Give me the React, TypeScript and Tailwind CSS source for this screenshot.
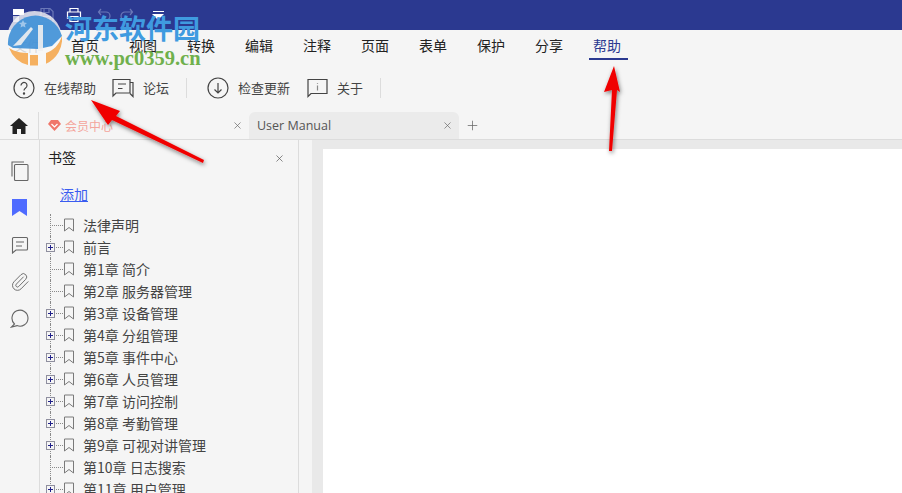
import React from 'react';
import { X, Plus, Paperclip } from 'lucide-react';

const menus = ['首页', '视图', '转换', '编辑', '注释', '页面', '表单', '保护', '分享'];

const bookmarks = [
  { label: '法律声明', expand: false },
  { label: '前言', expand: true },
  { label: '第1章 简介', expand: false },
  { label: '第2章 服务器管理', expand: false },
  { label: '第3章 设备管理', expand: true },
  { label: '第4章 分组管理', expand: true },
  { label: '第5章 事件中心', expand: true },
  { label: '第6章 人员管理', expand: true },
  { label: '第7章 访问控制', expand: true },
  { label: '第8章 考勤管理', expand: true },
  { label: '第9章 可视对讲管理', expand: true },
  { label: '第10章 日志搜索', expand: false },
  { label: '第11章 用户管理', expand: true },
];

function BookmarkRow({ label, expand }: { label: string; expand: boolean }) {
  return (
    <div className="h-[22px] shrink-0 flex items-center relative">
      {/* dotted tree lines */}
      <div className="absolute left-[11px] top-0 bottom-0 border-l border-dotted border-[#8a8a8a]" />
      <div className="w-[24px] shrink-0 relative h-full flex items-center">
        <div className="absolute left-[11px] right-0 top-1/2 border-t border-dotted border-[#8a8a8a]" />
        {expand && (
          <div className="relative ml-[7px] w-[9px] h-[9px] border border-[#8f8f9f] bg-[#f5f5f5] flex items-center justify-center">
            <div className="absolute w-[5px] h-px bg-[#20208a]" />
            <div className="absolute h-[5px] w-px bg-[#20208a]" />
          </div>
        )}
      </div>
      <svg width="12" height="14" viewBox="0 0 12 14" className="shrink-0" fill="none" stroke="#7a7a7a" strokeWidth="1">
        <path d="M1.5 1h9v12L6 9.5 1.5 13z" />
      </svg>
      <span className="ml-[8px] text-[14px] text-[#444] whitespace-nowrap">{label}</span>
    </div>
  );
}

export default function App() {
  return (
    <div
      className="w-[902px] h-[493px] overflow-hidden relative bg-[#f5f5f5] flex flex-col"
      style={{ fontFamily: '"Noto Sans CJK SC", "Noto Sans", sans-serif' }}
    >
      {/* Title bar */}
      <div className="h-[30px] shrink-0 bg-[#2b3990] flex items-center pl-[13px] gap-[12px]">
        <div className="w-[11px] h-[13px] flex flex-col gap-[1px]">
          <div className="h-[6px] bg-white" />
          <div className="h-[6px] bg-white/70 w-[6px]" />
        </div>
        <svg width="16" height="16" viewBox="0 0 16 16" fill="none" stroke="#6b78b8" strokeWidth="1.2" className="ml-[3px]">
          <path d="M2 1.5h9l3 3v10H2z" />
          <path d="M5 1.5v4h5v-4M5 14.5v-5h6v5" />
        </svg>
        <svg width="16" height="16" viewBox="0 0 16 16" fill="none" stroke="white" strokeWidth="1.2" className="-ml-[1px]">
          <path d="M4 5V1.5h8V5M4 11.5H1.5V5h13v6.5H12" />
          <path d="M4 9.5h8v5H4z" />
        </svg>
        <svg width="14" height="14" viewBox="0 0 14 14" fill="none" stroke="#6b78b8" strokeWidth="1.2" className="ml-[3px]">
          <path d="M4 1L1.5 4 4 7M1.5 4H9a3.5 3.5 0 0 1 0 8H5" />
        </svg>
        <svg width="14" height="14" viewBox="0 0 14 14" fill="none" stroke="#6b78b8" strokeWidth="1.2" className="-ml-[3px]">
          <path d="M10 1l2.5 3L10 7M12.5 4H5a3.5 3.5 0 0 0 0 8h4" />
        </svg>
        <div className="ml-[6px] flex flex-col items-center gap-[2px]">
          <div className="w-[11px] h-px bg-white" />
          <div className="w-0 h-0 border-x-[6px] border-x-transparent border-t-[6px] border-t-white" />
        </div>
      </div>

      {/* Menu row */}
      <div className="h-[33px] shrink-0 flex items-start pt-[3px] pl-[13px] text-[14px] text-[#222]">
        <span className="w-[58px] h-[27px] flex items-center text-[#555] pb-[2px]">文件</span>
        <div className="flex gap-[30px]">
          {menus.map((m) => (
            <span key={m} className="w-[28px] h-[27px] pb-[2px] flex items-center justify-center whitespace-nowrap">
              {m}
            </span>
          ))}
          <span className="w-[39px] -ml-[4px] h-[27px] pl-[4px] flex items-center text-[#2b3990] border-b-2 border-[#2b3990]">
            帮助
          </span>
        </div>
      </div>

      {/* Toolbar */}
      <div className="h-[49px] shrink-0 flex items-center pl-[13px] text-[13px] text-[#444]">
        <svg width="22" height="22" viewBox="0 0 22 22" fill="none" stroke="#444" strokeWidth="1.2">
          <circle cx="11" cy="11" r="10" />
          <path d="M8 8.5a3 3 0 1 1 4.6 2.5c-1 .7-1.6 1.2-1.6 2.5" />
          <circle cx="11" cy="16.5" r=".6" fill="#444" />
        </svg>
        <span className="ml-[9px]">在线帮助</span>
        <svg width="22" height="20" viewBox="0 0 22 20" fill="none" stroke="#444" strokeWidth="1.2" className="ml-[16px]">
          <path d="M1 1.5h17v13.5H4L1 18z" />
          <path d="M18 4.5h3v14l-3-3M6 6h8M6 10.5h4.5" />
        </svg>
        <span className="ml-[9px]">论坛</span>
        <div className="w-px h-[20px] bg-[#dcdcdc] ml-[17px]" />
        <svg width="22" height="22" viewBox="0 0 22 22" fill="none" stroke="#444" strokeWidth="1.2" className="ml-[20px]">
          <circle cx="11" cy="11" r="10" />
          <path d="M11 6v9.5M7.5 12.5l3.5 3.5 3.5-3.5" />
        </svg>
        <span className="ml-[9px]">检查更新</span>
        <svg width="21" height="20" viewBox="0 0 21 20" fill="none" stroke="#444" strokeWidth="1.2" className="ml-[17px]">
          <path d="M1 1.5h19v14H4L1 18.5z" />
          <path d="M10.5 5v.8M10.5 7.5v5" stroke="#888" />
        </svg>
        <span className="ml-[9px]">关于</span>
        <div className="w-px h-[20px] bg-[#dcdcdc] ml-[17px]" />
      </div>

      {/* Tabs */}
      <div className="h-[28px] shrink-0 flex items-end border-b border-[#dcdcdc] text-[12px]">
        <div className="w-[39px] h-[27px] flex items-center justify-center border-r border-[#dcdcdc]">
          <svg width="18" height="16" viewBox="0 0 18 16" fill="#222">
            <path d="M9 0L0 8h2.5v8H7v-5h4v5h4.5V8H18z" />
          </svg>
        </div>
        <div className="w-[210px] h-[27px] flex items-center pl-[9px] pr-[6px]">
          <svg width="13" height="11" viewBox="0 0 13 11" fill="#f0766a">
            <path d="M3 0h7l3 4-6.5 7L0 4z" />
            <path d="M3.5 4l3 3 3-3" stroke="white" strokeWidth="1.2" fill="none" />
          </svg>
          <span className="ml-[4px] text-[#f4a59c]">会员中心</span>
          <X size={11} className="ml-auto text-[#666]" strokeWidth={1.5} />
        </div>
        <div className="w-[210px] h-[27px] bg-[#ebebeb] rounded-t-[6px] flex items-center pl-[8px] pr-[6px] text-[#555]">
          <span className="text-[12.5px] mt-[2px]" style={{ fontFamily: '"Open Sans", sans-serif' }}>
            User Manual
          </span>
          <X size={11} className="ml-auto text-[#666]" strokeWidth={1.5} />
        </div>
        <Plus size={15} className="ml-[6px] mb-[6px] text-[#666]" strokeWidth={1.2} />
      </div>

      {/* Body */}
      <div className="flex-1 flex min-h-0">
        {/* Icon rail */}
        <div className="w-[40px] shrink-0 border-r border-[#dcdcdc] flex flex-col items-center pt-[12px]">
          <div className="h-[37px] flex items-center justify-center">
            <svg width="18" height="20" viewBox="0 0 18 20" fill="none" stroke="#666" strokeWidth="1.1">
              <path d="M1 15.5V1h12" />
              <rect x="3.5" y="3.5" width="13.5" height="16" rx="1" />
            </svg>
          </div>
          <div className="h-[37px] flex items-center justify-center">
            <svg width="15" height="17" viewBox="0 0 15 17" fill="#4f6bff">
              <path d="M0 0h15v17l-7.5-5L0 17z" />
            </svg>
          </div>
          <div className="h-[37px] flex items-center justify-center">
            <svg width="18" height="18" viewBox="0 0 18 18" fill="none" stroke="#666" strokeWidth="1.1">
              <path d="M2.5 1.5h13a1 1 0 0 1 1 1v10.5a1 1 0 0 1-1 1H5L1.5 17V2.5a1 1 0 0 1 1-1zM5 6h8M5 10h6" />
            </svg>
          </div>
          <div className="h-[37px] flex items-center justify-center">
            <Paperclip size={20} strokeWidth={1.1} className="text-[#666]" />
          </div>
          <div className="h-[37px] flex items-center justify-center">
            <svg width="19" height="19" viewBox="0 0 19 19" fill="none" stroke="#666" strokeWidth="1.1">
              <path d="M4.5 15A8 8 0 1 1 7 16.6L1.5 18z" />
            </svg>
          </div>
        </div>

        {/* Bookmark panel */}
        <div className="w-[259px] shrink-0 border-r border-[#dcdcdc] flex flex-col min-h-0 overflow-hidden">
          <div className="h-[35px] shrink-0 flex items-center justify-between pl-[8px] pr-[13px] text-[14px] text-[#222]">
            <span>书签</span>
            <X size={11} className="text-[#555] mt-[1px]" strokeWidth={1.5} />
          </div>
          <div className="h-[38px] mb-[1px] shrink-0 flex items-center pl-[20px] text-[14px] text-[#3a5cf0] underline">
            添加
          </div>
          <div className="flex flex-col -ml-[1px]">
            {bookmarks.map((b) => (
              <BookmarkRow key={b.label} label={b.label} expand={b.expand} />
            ))}
          </div>
        </div>

        {/* Document area */}
        <div className="flex-1 flex pl-[13px] min-w-0">
          <div className="flex-1 bg-[#e9e9e9] pl-[11px] pt-[9px]">
            <div className="w-full h-full bg-white" />
          </div>
        </div>
      </div>

      {/* Watermark */}
      <svg width="55" height="55" viewBox="0 0 55 55" className="absolute left-[7px] top-[11px]">
        <circle cx="27.5" cy="27.5" r="27.5" fill="#f7f7f7" opacity="0.8" />
        <path d="M1 34A27.5 27.5 0 0 1 55 25L45 35 31 38 6 37z" fill="#3d8fd6" opacity="0.9" />
        <path d="M6 35L24 16 26 18 14 34z" fill="#f0f0f0" opacity="0.9" />
        <rect x="31" y="14" width="5" height="26" fill="#f0f0f0" opacity="0.9" />
        <path d="M2 37C8 41 15 42 21 42V54A27.5 27.5 0 0 1 2 37z" fill="#f5b060" />
        <rect x="23" y="44" width="8" height="10.5" fill="#f5b060" />
        <path d="M39 42C46 40 52 34 55 25A27.5 27.5 0 0 1 39 52.7z" fill="#f5b060" />
        <path d="M16 9l1.2 2.6 2.8.3-2.1 1.9.6 2.8-2.5-1.4-2.5 1.4.6-2.8-2.1-1.9 2.8-.3z" fill="#9fc6ea" />
      </svg>
      <div className="absolute left-[65px] top-[11px] text-[27px] leading-[34px] font-bold text-[#3f9be0]">
        河东软件园
      </div>
      <div
        className="absolute left-[65px] top-[47px] text-[20.5px] leading-[22px] font-bold text-[#6fb04c]"
        style={{ fontFamily: '"Liberation Serif", serif' }}
      >
        www.pc0359.cn
      </div>

      {/* Red arrows */}
      <svg width="902" height="493" className="absolute inset-0 pointer-events-none">
        <defs>
          <filter id="shadow" x="-20%" y="-20%" width="140%" height="140%">
            <feDropShadow dx="1" dy="2" stdDeviation="2" floodColor="#000" floodOpacity="0.5" />
          </filter>
        </defs>
        <g filter="url(#shadow)" fill="#f00000">
          <path d="M204 160L116 116 120 111 91 100 108 125 112 120 203 163z" />
          <path d="M614 66L604 92 612 90 609 151 612 151 617 90 620 92z" />
        </g>
      </svg>
    </div>
  );
}
